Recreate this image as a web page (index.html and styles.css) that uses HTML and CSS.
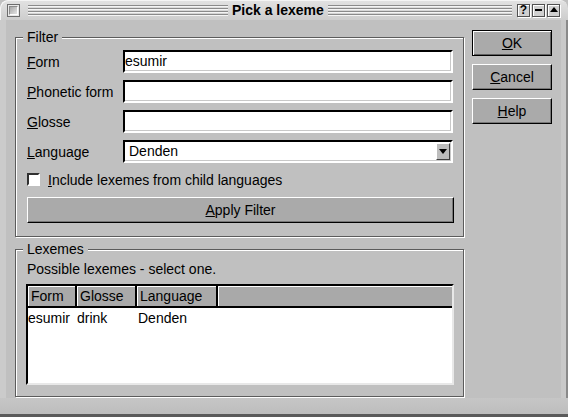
FILE: index.html
```html
<!DOCTYPE html>
<html>
<head>
<meta charset="utf-8">
<link rel="stylesheet" href="styles.css">
</head>
<body>
<div class="win">
  <div class="titlebar">
    <span class="tb-close"><span class="tb-close-in"></span></span>
    <span class="grooves grooves-left"></span>
    <span class="title">Pick a lexeme</span>
    <span class="grooves grooves-right"></span>
    <span class="tb-btn">?</span>
    <span class="tb-btn"><span class="tb-min"></span></span>
    <span class="tb-btn"><span class="tb-max"></span></span>
  </div>
  <div class="content">
    <div class="main">
      <div class="group filter">
        <span class="legend">Filter</span>
        <div class="row">
          <span class="label"><u>F</u>orm</span>
          <span class="input">esumir</span>
        </div>
        <div class="row">
          <span class="label"><u>P</u>honetic form</span>
          <span class="input"></span>
        </div>
        <div class="row">
          <span class="label"><u>G</u>losse</span>
          <span class="input"></span>
        </div>
        <div class="row">
          <span class="label"><u>L</u>anguage</span>
          <span class="select">
            <span class="select-text">Denden</span>
            <span class="select-arrow"><span class="tri"></span></span>
          </span>
        </div>
        <div class="check-row">
          <span class="checkbox"></span>
          <span class="check-label"><u>I</u>nclude lexemes from child languages</span>
        </div>
        <div class="btn wide"><span><u>A</u>pply Filter</span></div>
      </div>
      <div class="group lexemes">
        <span class="legend">Lexemes</span>
        <div class="hint">Possible lexemes - select one.</div>
        <div class="list">
          <div class="list-head">
            <span class="hcell c-form">Form</span>
            <span class="hcell c-glosse">Glosse</span>
            <span class="hcell c-lang">Language</span>
            <span class="hcell c-fill"></span>
          </div>
          <div class="list-row">
            <span class="cell c-form">esumir</span>
            <span class="cell c-glosse">drink</span>
            <span class="cell c-lang">Denden</span>
          </div>
        </div>
      </div>
    </div>
    <div class="side">
      <div class="btn default"><span><u>O</u>K</span></div>
      <div class="btn"><span><u>C</u>ancel</span></div>
      <div class="btn"><span><u>H</u>elp</span></div>
    </div>
  </div>
  <div class="footer"></div>
</div>
</body>
</html>
```
FILE: styles.css
```css
html, body {
  margin: 0;
  padding: 0;
  background: #c0c0c0;
}
body {
  font-family: "Liberation Sans", Arial, sans-serif;
  font-size: 14px;
  color: #000;
}
u { text-decoration: underline; text-underline-offset: 1px; }

.win {
  width: 568px;
  height: 417px;
  box-sizing: border-box;
  background: #c0c0c0;
  border-radius: 8px 8px 0 0;
  overflow: hidden;
  display: flex;
  flex-direction: column;
}

/* title bar */
.titlebar {
  height: 20px;
  flex: none;
  display: flex;
  align-items: center;
  padding: 0 8px 0 7px;
  background: linear-gradient(#e2e2e2, #cdcdcd);
  border-radius: 8px 8px 0 0;
  box-shadow: inset 1px 1px 0 #f4f4f4;
}
.tb-close {
  width: 13px;
  height: 13px;
  box-sizing: border-box;
  border: 1px solid #6c6c6c;
  background: #e8e8e8;
  display: flex;
  align-items: center;
  justify-content: center;
}
.tb-close-in {
  width: 9px;
  height: 9px;
  box-sizing: border-box;
  border: 1px solid;
  border-color: #8c8c8c #ffffff #ffffff #8c8c8c;
  background: linear-gradient(135deg, #a8a8a8, #e4e4e4);
}
.grooves {
  height: 11px;
  background: repeating-linear-gradient(to bottom, #8a8a8a 0, #8a8a8a 1px, #f4f4f4 1px, #f4f4f4 2px, transparent 2px, transparent 3px);
}
.grooves-left { width: 200px; margin-left: 8px; }
.grooves-right { flex: 1; margin-right: 3px; }
.title {
  font-weight: bold;
  font-size: 14px;
  margin: 0 4px;
  line-height: 16px;
}
.tb-btn {
  width: 13px;
  height: 13px;
  box-sizing: border-box;
  border: 1px solid #505050;
  box-shadow: inset 1px 1px 0 #ffffff, 1px 1px 0 #ffffff;
  background: #d0d0d0;
  margin-left: 2px;
  display: flex;
  align-items: center;
  justify-content: center;
  font-weight: bold;
  font-size: 12px;
  line-height: 11px;
}
.tb-btn + .tb-btn { margin-left: 2px; }
.tb-min {
  width: 7px;
  height: 2px;
  background: #000;
}
.tb-max {
  width: 0;
  height: 0;
  border-left: 4px solid transparent;
  border-right: 4px solid transparent;
  border-bottom: 5px solid #000;
  margin-top: -1px;
}

/* content */
.content {
  flex: 1;
  display: flex;
  padding-left: 15px;
  background: linear-gradient(to right, #cbcbcb 0, #cbcbcb 6px, #c0c0c0 6px, #c0c0c0 561px, #c9c9c9 561px, #c9c9c9 566px, #8a8a8a 566px);
}
.main {
  width: 449px;
  margin-top: 17px;
  display: flex;
  flex-direction: column;
}
.group {
  position: relative;
  border: 1px solid #5c5c5c;
  box-shadow: inset 1px 1px 0 #ffffff, 1px 1px 0 #ffffff;
  display: flex;
  flex-direction: column;
}
.legend {
  position: absolute;
  top: -10px;
  left: 7px;
  padding: 0 4px;
  line-height: 18px;
  background: #c0c0c0;
}
.filter {
  height: 200px;
  box-sizing: border-box;
  padding: 12px 10px 13px 11px;
  gap: 7px;
}
.row {
  display: flex;
  align-items: center;
  height: 23px;
}
.label {
  width: 96px;
  flex: none;
}
.input, .select {
  width: 331px;
  height: 23px;
  box-sizing: border-box;
  border: 2px solid;
  border-color: #000 #ffffff #ffffff #000;
  box-shadow: inset -1px -1px 0 #c8c8c8;
  background: #fff;
  display: flex;
  align-items: center;
  padding-left: 0;
  line-height: 17px;
}
.select {
  padding-left: 4px;
  padding-right: 1px;
}
.select-text { flex: 1; }
.select-arrow {
  width: 14px;
  height: 17px;
  box-sizing: border-box;
  background: #bdbdbd;
  border: 1px solid;
  border-color: #ffffff #404040 #404040 #ffffff;
  display: flex;
  align-items: center;
  justify-content: center;
}
.tri {
  width: 0;
  height: 0;
  border-left: 4px solid transparent;
  border-right: 4px solid transparent;
  border-top: 5px solid #000;
}
.check-row {
  display: flex;
  align-items: center;
  height: 20px;
}
.checkbox {
  width: 13px;
  height: 13px;
  box-sizing: border-box;
  border: 2px solid;
  border-color: #303030 #ffffff #ffffff #303030;
  background: #fff;
  margin-top: -1px;
}
.check-label { margin-left: 8px; }

.btn {
  height: 26px;
  box-sizing: border-box;
  background: #aaaaaa;
  border: 1px solid;
  border-color: #ffffff #000000 #000000 #ffffff;
  box-shadow: inset -1px -1px 0 #777777;
  display: flex;
  align-items: center;
  justify-content: center;
  line-height: 17px;
}
.btn.wide { width: 427px; }

.lexemes {
  margin-top: 12px;
  height: 148px;
  box-sizing: border-box;
  padding: 11px 10px 11px 11px;
}
.hint {
  line-height: 17px;
  height: 17px;
}
.list {
  margin-top: 6px;
  margin-left: -1px;
  width: 428px;
  height: 101px;
  box-sizing: border-box;
  border: 2px solid;
  border-color: #000 #e8e8e8 #e8e8e8 #000;
  background: #fff;
}
.list-head {
  display: flex;
  height: 22px;
  box-sizing: border-box;
  border-bottom: 2px solid #000;
}
.hcell {
  box-sizing: border-box;
  height: 20px;
  background: #a9a9a9;
  border-right: 2px solid #000;
  box-shadow: inset 1px 1px 0 #ffffff;
  padding-left: 3px;
  line-height: 20px;
}
.c-form { width: 49px; flex: none; }
.c-glosse { width: 60px; flex: none; }
.c-lang { width: 81px; flex: none; }
.c-fill { flex: 1; border-right: none; }
.list-row {
  display: flex;
  margin-top: 2px;
  line-height: 17px;
}
.cell { box-sizing: border-box; }
.list-row .c-lang { padding-left: 1px; }

.side {
  width: 80px;
  margin-left: 8px;
  padding-top: 10px;
  display: flex;
  flex-direction: column;
  gap: 8px;
}
.btn.default {
  border: 1px solid #000;
  box-shadow: inset 1px 1px 0 #ffffff, inset -1px -1px 0 #606060;
}

.footer {
  height: 19px;
  flex: none;
  box-sizing: border-box;
  background: linear-gradient(#c6c6c6, #bdbdbd);
  border-bottom: 3px solid #5a5a5a;
}
```
